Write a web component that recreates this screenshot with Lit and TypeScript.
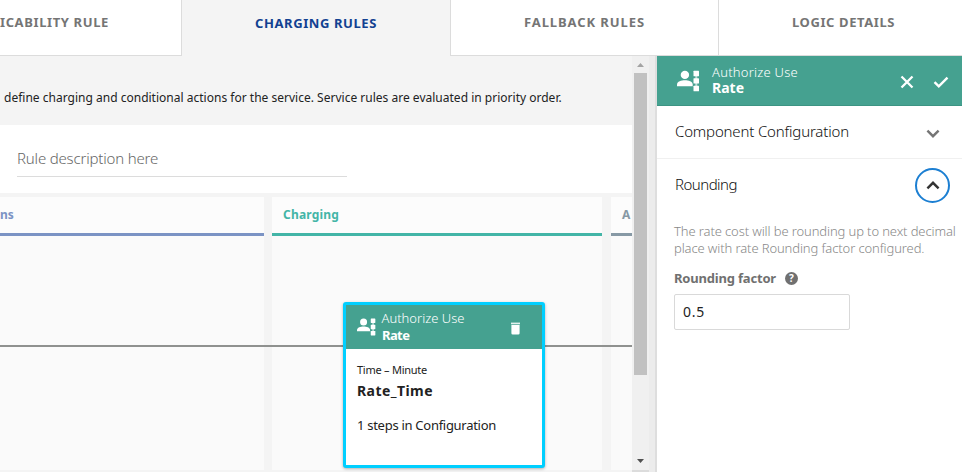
import { LitElement, html, css, svg } from "lit";
import { customElement } from "lit/decorators.js";

const actorIcon = (cls: string) => html`<svg class=${cls} viewBox="0 0 24 22" fill="#fff" aria-hidden="true">
  <circle cx="7.9" cy="4.9" r="4.2"/>
  <path d="M0 16.2v-1.7c0-2.9 4.4-4.2 7.9-4.2s7.8 1.3 7.8 4.2v1.7z"/>
  <path d="M19.3 3v16" stroke="#fff" stroke-opacity=".6" stroke-width="2"/>
  <rect x="16.5" y=".8" width="5.5" height="5.4" rx=".5"/>
  <rect x="16.5" y="8.2" width="5.5" height="5.4" rx=".5"/>
  <rect x="16.5" y="15.8" width="5.5" height="5.4" rx=".5"/>
</svg>`;

const stroke = (cls: string, d: string, w: number) =>
  html`<svg class=${cls} viewBox="0 0 16 16" fill="none" stroke="currentColor" stroke-width=${w}>${svg`<path d=${d}/>`}</svg>`;

@customElement("app-root")
export class AppRoot extends LitElement {
  static styles = css`
    :host { display: flex; flex-direction: column; width: 962px; height: 472px; overflow: hidden; background: #fff;
      font-family: "Noto Sans", sans-serif; color: #222; white-space: nowrap; }
    * { box-sizing: border-box; }
    svg { display: block; flex: none; }
    .tabs { display: grid; grid-template-columns: 182px 268px 269px 243px; height: 56px; flex: none; }
    .tab { border-bottom: 1px solid #dcdcdc; font-size: 13px; font-weight: 700; line-height: 20px; color: #757575; padding-top: 12px; }
    .t1 { border-right: 1px solid #dcdcdc; display: flex; justify-content: flex-end; padding-right: 72px; letter-spacing: .62px; }
    .t2 { background: #f4f4f4; border-color: #f4f4f4; color: #124191; padding: 13px 0 0 73px; letter-spacing: .59px; }
    .t3 { border-left: 1px solid #dcdcdc; border-right: 1px solid #dcdcdc; padding-left: 73px; letter-spacing: .91px; }
    .t4 { padding-left: 73px; letter-spacing: .59px; }
    .body { display: flex; flex: 1; min-height: 0; }
    .main { width: 632px; display: flex; flex-direction: column; background: #f4f4f4; overflow: hidden; }
    .intro { height: 69px; padding: 33px 0 0 4px; font-size: 12px; line-height: 18px; letter-spacing: .01px; flex: none; }
    .desc { height: 68px; background: #fff; padding: 20px 0 0 17px; flex: none; }
    .field { width: 330px; height: 32px; border-bottom: 1px solid #dcdcdc; font-size: 15px; font-weight: 300; line-height: 26px; letter-spacing: -.18px; color: #666; }
    .board { position: relative; display: grid; grid-template-columns: 264px 330px 330px; column-gap: 8px; margin-top: 4px; height: 273px; flex: none; }
    .col { background: #fafafa; }
    .col.a { margin-left: 1px; }
    .head { height: 39px; background: #fcfcfc; border-bottom: 3px solid; padding-left: 11px; font-size: 12px; font-weight: 700; line-height: 35px; }
    .c1 { color: #7b93c4; display: flex; padding-left: 0; }
    .c2 { color: #43b5a7; letter-spacing: .19px; }
    .c3 { color: #8799a5; }
    .line { position: absolute; left: 0; right: 0; top: 148px; height: 2px; background: #8f918f; }
    .card { position: absolute; left: 343px; top: 105px; width: 202px; height: 166px; border: 3px solid #00cfff; border-radius: 3px; background: #fff; box-shadow: 0 1px 3px rgba(0,0,0,.3); }
    .chead { height: 44px; background: #45a190; color: #fff; display: flex; padding: 5px 21px 0 11px; }
    .cicon { width: 20px; height: 20px; margin: 7px 5px 0 0; }
    .names { flex: 1; }
    .cuse { font-size: 13px; font-weight: 300; line-height: 17px; letter-spacing: .01px; margin-left: -.5px; }
    .crate { font-size: 13px; font-weight: 700; line-height: 17px; letter-spacing: -.6px; }
    .trash { width: 11px; height: 13px; margin: 12px 0 0; }
    .cbody { padding-left: 11px; }
    .time { font-size: 11px; line-height: 16px; letter-spacing: -.25px; margin-top: 13px; }
    .rt { font-size: 14px; font-weight: 700; line-height: 20px; letter-spacing: .44px; margin-top: 3px; }
    .steps { font-size: 13px; line-height: 18px; letter-spacing: -.28px; margin-top: 15px; }
    .scroll { width: 17px; display: flex; flex-direction: column; background: #f0f0f0; padding: 7px 2px 7px; border-bottom: 2px solid #dcdcdc; }
    .up, .down { width: 7px; height: 4px; margin-left: 3px; }
    .up { margin-bottom: 6px; }
    .thumb { height: 302px; background: #c1c1c1; margin-bottom: auto; }
    .gutter { width: 8px; background: #ececec; border-right: 2px solid #dedede; }
    .panel { flex: 1; min-width: 0; }
    .phead { height: 50px; background: #45a190; border-bottom: 1px solid #3c9483; color: #fff; display: flex; padding: 8px 13px 0 20px; }
    .picon { width: 24px; height: 22px; margin: 6px 11px 0 0; }
    .puse { font-size: 13px; font-weight: 300; line-height: 17px; letter-spacing: .24px; }
    .prate { font-size: 14px; font-weight: 700; line-height: 14px; }
    .ic { width: 16px; height: 16px; margin-top: 10px; }
    .x { margin-right: 18.5px; }
    .sec { display: flex; justify-content: space-between; font-size: 15px; font-weight: 300; padding: 0 21px 0 18px; color: #111; }
    .s1 { height: 53px; line-height: 51px; border-bottom: 1px solid #f0f0f0; letter-spacing: -.17px; padding-right: 21px; }
    .s2 { height: 54px; line-height: 51px; letter-spacing: -.52px; padding-right: 12px; }
    .chev { width: 16px; height: 16px; color: #757575; margin-top: 19px; }
    .ring { width: 35px; height: 35px; border: 2px solid #1c7fd2; border-radius: 50%; margin-top: 9px; display: grid; place-items: center; color: #333; }
    .rc { width: 16px; height: 16px; }
    .help { padding-left: 17px; margin-top: 10px; font-size: 13px; font-weight: 300; line-height: 17px; letter-spacing: -.11px; color: #888; }
    .label { display: flex; align-items: center; gap: 9px; padding-left: 17px; margin-top: 11px; height: 20px; font-size: 13px; font-weight: 700; letter-spacing: -.19px; color: #707070; }
    .q { width: 13px; height: 13px; border-radius: 50%; background: #707070; color: #fff; font-size: 10px; line-height: 13px; text-align: center; letter-spacing: 0; }
    .input { margin: 6px 0 0 17px; width: 176px; height: 36px; border: 1px solid #d9d9d9; border-radius: 2px; padding-left: 8px; font-size: 14px; line-height: 34px; letter-spacing: .74px; color: #222; }
  `;

  render() {
    return html`
      <div class="tabs">
        <div class="tab t1">ICABILITY RULE</div>
        <div class="tab t2">CHARGING RULES</div>
        <div class="tab t3">FALLBACK RULES</div>
        <div class="tab t4">LOGIC DETAILS</div>
      </div>
      <div class="body">
        <div class="main">
          <div class="intro">define charging and conditional actions for the service. Service rules are evaluated in priority order.</div>
          <div class="desc"><div class="field">Rule description here</div></div>
          <div class="board">
            <div class="col"><div class="head c1">ns</div></div>
            <div class="col"><div class="head c2">Charging</div></div>
            <div class="col a"><div class="head c3">A</div></div>
            <div class="line"></div>
            <div class="card">
              <div class="chead">
                ${actorIcon("cicon")}
                <div class="names"><div class="cuse">Authorize Use</div><div class="crate">Rate</div></div>
                <svg class="trash" viewBox="0 0 11 13" fill="#fff"><path d="M1 .6h9v1.7H1z" fill-opacity=".85"/><path d="M1.4 3h8.2v8.2a1.3 1.3 0 0 1-1.3 1.3H2.7a1.3 1.3 0 0 1-1.3-1.3z"/></svg>
              </div>
              <div class="cbody">
                <div class="time">Time – Minute</div>
                <div class="rt">Rate_Time</div>
                <div class="steps">1 steps in Configuration</div>
              </div>
            </div>
          </div>
        </div>
        <div class="scroll">
          <svg class="up" viewBox="0 0 7 4" fill="#a3a3a3"><path d="M0 4 3.5 0 7 4z"/></svg>
          <div class="thumb"></div>
          <svg class="down" viewBox="0 0 7 4" fill="#505050"><path d="M0 0h7L3.5 4z"/></svg>
        </div>
        <div class="gutter"></div>
        <div class="panel">
          <div class="phead">
            ${actorIcon("picon")}
            <div class="names"><div class="puse">Authorize Use</div><div class="prate">Rate</div></div>
            ${stroke("ic x", "M2.5 2.5l11 11M13.5 2.5l-11 11", 2.3)}
            ${stroke("ic", "M1.5 8.1l4.3 4.2L14.5 3.6", 2.4)}
          </div>
          <div class="sec s1">Component Configuration${stroke("chev", "M2.4 5.6 8 11.2l5.6-5.6", 2.4)}</div>
          <div class="sec s2">Rounding<div class="ring">${stroke("rc", "M2.4 10.4 8 4.8l5.6 5.6", 2.4)}</div></div>
          <div class="help">The rate cost will be rounding up to next decimal<br>place with rate Rounding factor configured.</div>
          <div class="label">Rounding factor<span class="q">?</span></div>
          <div class="input">0.5</div>
        </div>
      </div>`;
  }
}
